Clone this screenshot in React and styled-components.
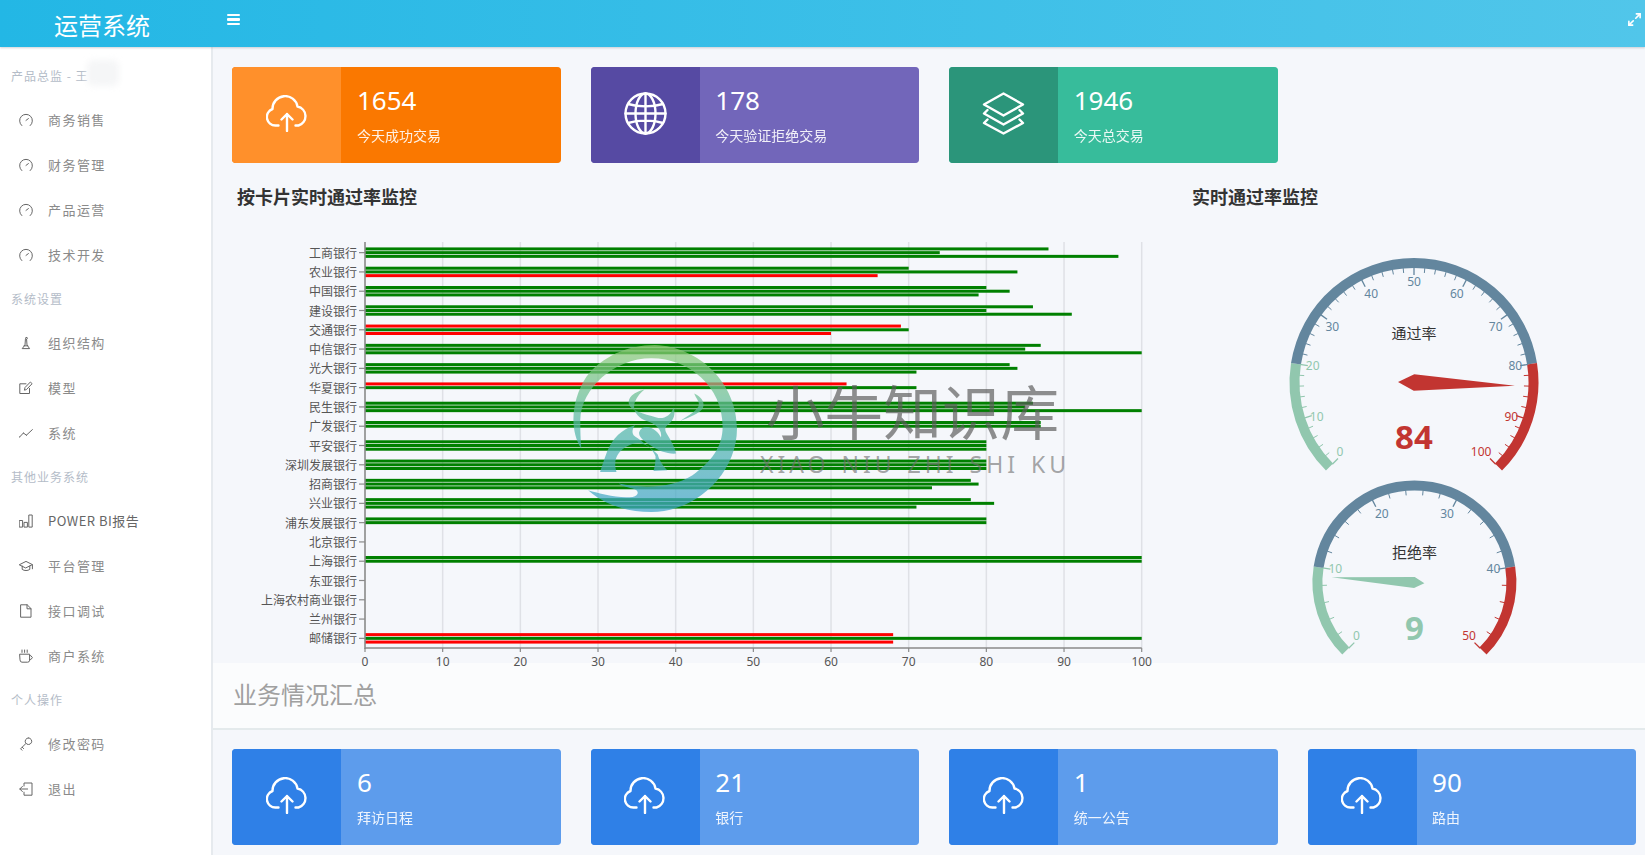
import React from "react";
import styled, { createGlobalStyle } from "styled-components";
import { Maximize2 } from "lucide-react";

const SANS = `"Noto Sans", "Noto Sans CJK SC", sans-serif`;
const CJK = `"Noto Sans CJK SC", "Noto Sans", sans-serif`;

const Global = createGlobalStyle`
  html, body { margin: 0; padding: 0; height: 100%; overflow: hidden; background: #f5f7fb; }
  * { box-sizing: border-box; }
  body { font-family: ${SANS}; }
`;

const Page = styled.div`
  position: relative;
  width: 1645px;
  height: 855px;
  display: flex;
  flex-direction: column;
  overflow: hidden;
`;
const Header = styled.header`
  flex: 0 0 47px;
  display: flex;
  align-items: center;
  color: #fff;
  background: linear-gradient(90deg, #23b7e5, #51c6ea);
  box-shadow: 0 1px 2px rgba(120, 130, 140, 0.35);
  z-index: 2;
`;
const Brand = styled.div`
  width: 227px;
  padding: 3px 0 0 54px;
  font: 400 24px/1 ${CJK};
`;
const MenuButton = styled.div`
  width: 13px;
  height: 38px;
  padding-top: 14px;
  align-self: flex-start;
  display: flex;
  flex-direction: column;
  gap: 2px;
  span { display: block; height: 2.4px; background: #fff; border-radius: 1px; }
`;
const ExpandButton = styled.div`
  margin-left: auto;
  padding: 0 3px 9px 0;
  display: flex;
`;
const Body = styled.div`
  flex: 1;
  display: flex;
  min-height: 0;
`;
const Sidebar = styled.aside`
  flex: 0 0 213px;
  background: #fff;
  border-right: 2px solid #e6eaee;
  padding-top: 7px;
`;
const NavLabel = styled.div`
  position: relative;
  height: ${(p) => p.$h || 43}px;
  padding-left: 11px;
  display: flex;
  align-items: center;
  font: 400 12px/1 ${CJK};
  letter-spacing: 1px;
  color: #b4bcc8;
`;
const NamePatch = styled.div`
  position: absolute;
  left: 87px;
  top: 6px;
  width: 32px;
  height: 26px;
  background: #f5f6f7;
  filter: blur(3px);
  border-radius: 6px;
`;
const NavItem = styled.div`
  height: 45px;
  padding-left: 19px;
  display: flex;
  align-items: center;
  gap: 15px;
  font: 400 13px/1 ${CJK};
  letter-spacing: ${(p) => (p.$strong ? "0.5px" : "1.45px")};
  color: ${(p) => (p.$strong ? "#666" : "#8a8a8a")};
  svg { flex: 0 0 14px; fill: none; stroke: #666; stroke-width: 1; stroke-linecap: round; stroke-linejoin: round; }
`;
const Main = styled.main`
  flex: 1;
  min-width: 0;
  display: flex;
  flex-direction: column;
`;
const CardGrid = styled.div`
  display: grid;
  grid-template-columns: repeat(4, 328.4px);
  column-gap: 30px;
  padding: ${(p) => p.$top}px 0 0 19.4px;
`;
const Card = styled.div`
  height: 96px;
  display: flex;
  border-radius: 4px;
  overflow: hidden;
  color: #fff;
  background: ${(p) => p.$light};
  box-shadow: 0 0 0.5px 0 ${(p) => p.$light}80;
`;
const CardIcon = styled.div`
  flex: 0 0 109px;
  padding-bottom: 3px;
  display: flex;
  align-items: center;
  justify-content: center;
  background: ${(p) => p.$dark};
  svg { fill: none; stroke: #fff; stroke-width: 2.4; stroke-linecap: round; stroke-linejoin: round; }
`;
const CardBody = styled.div`
  padding: 15px 0 0 15.5px;
`;
const CardNumber = styled.div`
  font: 400 26px/36px ${SANS};
`;
const CardLabel = styled.div`
  margin-top: 7px;
  font: 400 14px/20px ${CJK};
  opacity: 0.9;
`;
const ChartRow = styled.div`
  position: relative;
  z-index: 1;
  flex: 0 0 500px;
  height: 500px;
  display: flex;
`;
const ChartColumn = styled.section`
  flex: 0 0 ${(p) => p.$w}px;
  display: flex;
  flex-direction: column;
`;
const ChartTitle = styled.h2`
  margin: 0;
  padding: 21px 0 2px ${(p) => p.$left}px;
  font: 700 18px/24px ${CJK};
  color: #333;
`;
const ChartSvg = styled.svg`
  display: block;
  flex-shrink: 0;
`;
const AxisText = styled.text`
  font: 400 12px ${CJK};
  fill: #555;
`;
const TickText = styled.text`
  font: 400 12px ${SANS};
`;
const GaugeTitle = styled.text`
  font: 400 15px ${CJK};
  fill: #333;
`;
const GaugeValue = styled.text`
  font: 700 33px ${SANS};
`;
const SectionHeading = styled.div`
  flex: 0 0 67px;
  padding: 0 0 3px 20px;
  display: flex;
  align-items: center;
  background: #fbfcfd;
  border-bottom: 2px solid #e4eaec;
  font: 400 24px/1 ${CJK};
  color: #a0a0a0;
`;
const Watermark = styled.div`
  position: absolute;
  z-index: 3;
  left: 571px;
  top: 345px;
  display: flex;
  gap: 25px;
  pointer-events: none;
`;
const WatermarkText = styled.div`
  padding-top: 29px;
  margin-left: 4px;
`;
const WatermarkName = styled.div`
  font: 400 58.6px/71px ${CJK};
  color: rgba(90, 90, 90, 0.68);
`;
const WatermarkPinyin = styled.div`
  margin: 5px 0 0 -6px;
  font: 400 23px/28px ${SANS};
  letter-spacing: 4px;
  word-spacing: 2px;
  white-space: nowrap;
  color: rgba(110, 110, 110, 0.62);
`;

const CloudIcon = () => (
  <svg width="42" height="37" viewBox="0 0 42 37">
    <path d="M12.5 30.5H9.5A8.5 8.5 0 0 1 6.5 14A12.6 12.6 0 0 1 31.5 11.5A9.8 9.8 0 0 1 32.5 30.5H29.5" />
    <path d="M21 36V19M15.5 24.5 21 19l5.5 5.5" />
  </svg>
);
const GlobeIcon = () => (
  <svg width="43" height="43" viewBox="0 0 43 43">
    <circle cx="21.5" cy="21.5" r="20" />
    <ellipse cx="21.5" cy="21.5" rx="10" ry="20" />
    <path d="M21.5 1.5v40M4 12c10 3.2 25 3.2 35 0M4 31c10-3.2 25-3.2 35 0M1.5 21.5h40" />
  </svg>
);
const LayersIcon = () => (
  <svg width="43" height="43" viewBox="0 0 43 43">
    <path d="M21.5 1.5 41 12.5 21.5 23.5 2 12.5Z" />
    <path d="M5.5 18 2 21.5 21.5 32.5 41 21.5 37.5 18" />
    <path d="M5.5 27.5 2 31 21.5 41.5 41 31 37.5 27.5" />
  </svg>
);

const ni = (children) => (
  <svg width="14" height="14" viewBox="0 0 14 14">
    {children}
  </svg>
);
const icons = {
  speed: ni(<path d="M2.8 12.6A6.4 6.4 0 1 1 11.2 12.6M7 7.4 9.4 5.6" />),
  org: ni(<path d="M7.4 1.4a.9.9 0 1 0 .1 0M6.4 3.5 6 9 3.2 12.6H10.6L8 9 7.6 3.5M5 9.8h3.8" />),
  note: ni(<path d="M10.5 7.5v5H.8V2.8H7M5.5 8.8l.5-2.3L11.4 1l1.7 1.7-5.4 5.6Z" />),
  graph: ni(<path d="M.6 11 4.4 7l3 2.2L13.4 3.6M.6 11h.1M4.4 7h.1M7.4 9.2h.1" />),
  bars: ni(<path d="M.6 6.5h3v6.6h-3ZM5.4 8.4h3v4.7h-3ZM10.2 1h3v12.1h-3Z" />),
  cap: ni(<path d="M.6 5.6 7 2.4l6.4 3.2L7 8.8ZM3.2 7v3.4c2 1.5 5.6 1.5 7.6 0V7M13.4 5.8v4" />),
  doc: ni(<path d="M2 .8h6.2L12 4.6v8.6H2ZM8 .8v4h4" />),
  cup: ni(<path d="M1 5.2h9.6v6a2 2 0 0 1-2 2H3a2 2 0 0 1-2-2ZM10.6 6.6h1.2l1.6 2-1.6 2h-1.2M3 1v2.4M5.6 1v2.4M8.2 1v2.4" />),
  key: ni(<path d="M9.4.9a3.3 3.3 0 1 0 .1 0M6.8 6.6 1.6 11.8l1.4 1.4M3.2 10.2l1.4 1.4" />),
  logout: ni(<path d="M5 4V1h8v12.2H5v-3M8.6 7H.8M3.4 4.4.8 7l2.6 2.6" />),
};

const nav = [
  { label: "产品总监 - 王", h: 43, patch: true },
  { item: "商务销售", icon: "speed" },
  { item: "财务管理", icon: "speed" },
  { item: "产品运营", icon: "speed" },
  { item: "技术开发", icon: "speed" },
  { label: "系统设置" },
  { item: "组织结构", icon: "org" },
  { item: "模型", icon: "note" },
  { item: "系统", icon: "graph" },
  { label: "其他业务系统" },
  { item: "POWER BI报告", icon: "bars", strong: true },
  { item: "平台管理", icon: "cap" },
  { item: "接口调试", icon: "doc" },
  { item: "商户系统", icon: "cup" },
  { label: "个人操作" },
  { item: "修改密码", icon: "key" },
  { item: "退出", icon: "logout" },
];

const G = "#008000";
const R = "#ff0000";
const banks = [
  ["工商银行", [88, G], [74, G], [97, G]],
  ["农业银行", [70, G], [84, G], [66, R]],
  ["中国银行", [80, G], [83, G], [79, G]],
  ["建设银行", [86, G], [80, G], [91, G]],
  ["交通银行", [69, R], [70, G], [60, R]],
  ["中信银行", [87, G], [85, G], [100, G]],
  ["光大银行", [83, G], [84, G], [71, G]],
  ["华夏银行", [62, R], [71, G], null],
  ["民生银行", [86, G], [85, G], [100, G]],
  ["广发银行", [87, G], [87, G], null],
  ["平安银行", [80, G], [80, G], [80, G]],
  ["深圳发展银行", [80, G], [80, G], [80, G]],
  ["招商银行", [78, G], [79, G], [73, G]],
  ["兴业银行", [78, G], [81, G], [71, G]],
  ["浦东发展银行", [80, G], [80, G], null],
  ["北京银行", null, null, null],
  ["上海银行", [100, G], [100, G], null],
  ["东亚银行", null, null, null],
  ["上海农村商业银行", null, null, null],
  ["兰州银行", null, null, null],
  ["邮储银行", [68, R], [100, G], [68, R]],
];

const X0 = 365;
const UNIT = 7.767;
const TOP = 243;
const BOTTOM = 648;
const BAND = (BOTTOM - TOP) / 21;

function BarChart() {
  const xs = Array.from({ length: 11 }, (_, i) => i * 10);
  return (
    <ChartSvg width="947" height="460" viewBox="213 210 947 460">
      {xs.slice(1).map((v) => (
        <line key={v} x1={X0 + v * UNIT} x2={X0 + v * UNIT} y1={TOP - 1} y2={BOTTOM} stroke="#dfe1e6" strokeWidth="1.5" />
      ))}
      {banks.map(([name, ...vals], i) => {
        const cy = TOP + BAND * (i + 0.5);
        return (
          <g key={name}>
            <line x1={X0 - 6} x2={X0} y1={cy} y2={cy} stroke="#8a8a8a" strokeWidth="1.2" />
            <AxisText x={357} y={cy} dy="0.42em" textAnchor="end">{name}</AxisText>
            {vals.map((b, j) =>
              b ? <rect key={j} x={X0} y={cy + (j - 1) * 3.72 - 1.5} width={b[0] * UNIT} height="3" fill={b[1]} /> : null
            )}
          </g>
        );
      })}
      <line x1={X0} x2={X0} y1={TOP - 1} y2={BOTTOM + 1} stroke="#8a8a8a" strokeWidth="1.6" />
      <line x1={X0} x2={X0 + 100 * UNIT} y1={BOTTOM} y2={BOTTOM} stroke="#8a8a8a" strokeWidth="1.6" />
      {xs.map((v) => (
        <g key={v}>
          <line x1={X0 + v * UNIT} x2={X0 + v * UNIT} y1={BOTTOM} y2={BOTTOM + 4} stroke="#8a8a8a" strokeWidth="1.2" />
          <TickText x={X0 + v * UNIT} y={661.5} dy="0.36em" textAnchor="middle" fill="#555">{v}</TickText>
        </g>
      ))}
    </ChartSvg>
  );
}

const GC = { low: "#91c7ae", mid: "#63869e", high: "#c23531" };
const colorFor = (r) => (r <= 0.2001 ? GC.low : r <= 0.8001 ? GC.mid : GC.high);
const polar = (cx, cy, r, deg) => {
  const a = (deg * Math.PI) / 180;
  return [cx + r * Math.cos(a), cy - r * Math.sin(a)];
};
const angleOf = (ratio) => 225 - 270 * ratio;

function Gauge({ cx, cy, R: rad, max, major, value, titleText, titleY, valueY, needle }) {
  const arc = (from, to) => {
    const [x1, y1] = polar(cx, cy, rad - 5, angleOf(from));
    const [x2, y2] = polar(cx, cy, rad - 5, angleOf(to));
    const large = (to - from) * 270 > 180 ? 1 : 0;
    return `M${x1} ${y1}A${rad - 5} ${rad - 5} 0 ${large} 1 ${x2} ${y2}`;
  };
  const ratio = value / max;
  const a = angleOf(ratio);
  const tip = polar(cx, cy, needle.len, a);
  const tail = polar(cx, cy, -needle.tail, a);
  const s1 = polar(cx, cy, needle.half, a + 90);
  const s2 = polar(cx, cy, needle.half, a - 90);
  const total = major * 5;
  const ticks = Array.from({ length: total + 1 }, (_, i) => i);
  return (
    <g>
      <path d={arc(0, 0.2)} stroke={GC.low} strokeWidth="10" fill="none" />
      <path d={arc(0.2, 0.8)} stroke={GC.mid} strokeWidth="10" fill="none" />
      <path d={arc(0.8, 1)} stroke={GC.high} strokeWidth="10" fill="none" />
      {ticks.map((i) => {
        const r = i / total;
        const isMajor = i % 5 === 0;
        const c = colorFor(r);
        const [x1, y1] = polar(cx, cy, rad - 9, angleOf(r));
        const [x2, y2] = polar(cx, cy, rad - (isMajor ? 17 : 14.5), angleOf(r));
        return <line key={i} x1={x1} y1={y1} x2={x2} y2={y2} stroke={c} strokeWidth={isMajor ? 1.3 : 1} />;
      })}
      {ticks.filter((i) => i % 5 === 0).map((i) => {
        const r = i / total;
        const rad2 = (angleOf(r) * Math.PI) / 180;
        const ux = Math.cos(rad2);
        const uy = -Math.sin(rad2);
        const [x, y] = polar(cx, cy, rad - 15, angleOf(r));
        return (
          <TickText
            key={i}
            x={x}
            y={y}
            fill={colorFor(r)}
            textAnchor={ux < -0.4 ? "start" : ux > 0.4 ? "end" : "middle"}
            dominantBaseline={uy < -0.4 ? "text-before-edge" : uy > 0.4 ? "text-after-edge" : "central"}
          >
            {Math.round(r * max)}
          </TickText>
        );
      })}
      <polygon points={`${tip} ${s1} ${tail} ${s2}`} fill={colorFor(ratio)} />
      <GaugeTitle x={cx} y={titleY} dy="0.36em" textAnchor="middle">{titleText}</GaugeTitle>
      <GaugeValue x={cx} y={valueY} dy="0.36em" textAnchor="middle" fill={colorFor(ratio)}>{value}</GaugeValue>
    </g>
  );
}

const logoRing = "M115 355C80 300 85 210 130 140C175 80 250 45 330 45C460 50 570 160 570 295C570 430 450 545 320 545C240 545 180 520 135 480C170 490 220 505 265 500C285 495 285 480 265 475C245 470 230 465 225 460C290 475 380 475 440 435C495 395 528 350 528 290C528 170 430 85 320 85C210 85 115 175 112 270C112 300 113 330 115 355Z";
const logoHead = "M300 178C268 186 250 202 254 222C258 240 296 252 335 262C355 268 375 258 385 232C390 250 388 268 368 284C358 292 358 300 368 316C380 336 390 356 392 370C368 372 340 362 318 346C298 332 282 320 284 306C288 294 300 288 315 292C332 298 342 310 348 322C352 300 335 280 300 270C280 262 262 240 272 215C278 198 290 186 300 178Z";
const logoBody = "M272 285C235 295 205 325 190 365C182 388 175 408 170 425L218 425C212 405 212 385 225 368C240 350 265 335 290 340C312 345 325 360 332 378C332 395 330 410 326 422L366 420C352 405 342 388 338 372C310 345 280 325 268 315C262 305 265 295 272 285Z";
const logoHorn = "M445 190C465 200 478 215 470 235C460 250 430 262 405 272C425 258 450 245 458 228C462 215 450 205 445 190Z";

function WatermarkLogo() {
  return (
    <svg width="166" height="167" viewBox="85 45 485 500" preserveAspectRatio="none">
      <defs>
        <linearGradient id="wm" gradientUnits="userSpaceOnUse" x1="0" y1="45" x2="0" y2="545">
          <stop offset="0" stopColor="#91cc74" />
          <stop offset="0.5" stopColor="#55b8aa" />
          <stop offset="1" stopColor="#41a5cb" />
        </linearGradient>
      </defs>
      <g fill="url(#wm)" opacity="0.72">
        <path d={logoRing} />
        <path d={logoHead} />
        <path d={logoBody} />
        <path d={logoHorn} />
      </g>
    </svg>
  );
}

const topCards = [
  { value: "1654", label: "今天成功交易", dark: "#ff902b", light: "#fa7800", Icon: CloudIcon },
  { value: "178", label: "今天验证拒绝交易", dark: "#564aa3", light: "#7266ba", Icon: GlobeIcon },
  { value: "1946", label: "今天总交易", dark: "#2b957a", light: "#37bc9b", Icon: LayersIcon },
];
const bottomCards = [
  { value: "6", label: "拜访日程" },
  { value: "21", label: "银行" },
  { value: "1", label: "统一公告" },
  { value: "90", label: "路由" },
].map((c) => ({ ...c, dark: "#2f80e7", light: "#5d9cec", Icon: CloudIcon }));

const StatCard = ({ value, label, dark, light, Icon }) => (
  <Card $light={light}>
    <CardIcon $dark={dark}><Icon /></CardIcon>
    <CardBody>
      <CardNumber>{value}</CardNumber>
      <CardLabel>{label}</CardLabel>
    </CardBody>
  </Card>
);

export default function App() {
  return (
    <Page>
      <Global />
      <Header>
        <Brand>运营系统</Brand>
        <MenuButton><span /><span /><span /></MenuButton>
        <ExpandButton><Maximize2 size={15} strokeWidth={2.6} color="#fff" /></ExpandButton>
      </Header>
      <Body>
        <Sidebar>
          {nav.map((n) =>
            n.label ? (
              <NavLabel key={n.label} $h={n.h}>
                {n.label}
                {n.patch && <NamePatch />}
              </NavLabel>
            ) : (
              <NavItem key={n.item} $strong={n.strong}>
                {icons[n.icon]}
                <span>{n.item}</span>
              </NavItem>
            )
          )}
        </Sidebar>
        <Main>
          <CardGrid $top={20}>
            {topCards.map((c) => <StatCard key={c.label} {...c} />)}
          </CardGrid>
          <ChartRow>
            <ChartColumn $w={947}>
              <ChartTitle $left={24}>按卡片实时通过率监控</ChartTitle>
              <BarChart />
            </ChartColumn>
            <ChartColumn $w={485}>
              <ChartTitle $left={32}>实时通过率监控</ChartTitle>
              <ChartSvg width="485" height="453" viewBox="1160 210 485 453">
                <Gauge cx={1414} cy={382.5} R={124.5} max={100} major={10} value={84} titleText="通过率" titleY={334} valueY={437.5} needle={{ len: 101, tail: 16, half: 8.2 }} />
                <Gauge cx={1414.4} cy={582.5} R={102} max={50} major={5} value={9} titleText="拒绝率" titleY={552.5} valueY={628} needle={{ len: 83, tail: 10, half: 5.6 }} />
              </ChartSvg>
            </ChartColumn>
          </ChartRow>
          <SectionHeading>业务情况汇总</SectionHeading>
          <CardGrid $top={19}>
            {bottomCards.map((c) => <StatCard key={c.label} {...c} />)}
          </CardGrid>
        </Main>
      </Body>
      <Watermark>
        <WatermarkLogo />
        <WatermarkText>
          <WatermarkName>小牛知识库</WatermarkName>
          <WatermarkPinyin>XIAO NIU ZHI SHI KU</WatermarkPinyin>
        </WatermarkText>
      </Watermark>
    </Page>
  );
}
